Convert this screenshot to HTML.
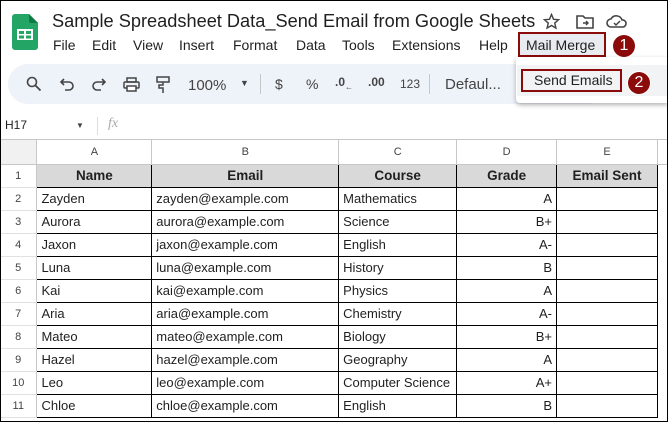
<!DOCTYPE html>
<html><head><style>
*{margin:0;padding:0;box-sizing:border-box}
body{width:668px;height:422px;overflow:hidden;background:#fff;font-family:"Liberation Sans",sans-serif;position:relative;color:#1f1f1f}
.frame{position:absolute;left:0;top:0;width:668px;height:422px;border:1px solid #000;z-index:50;pointer-events:none}
.abs{position:absolute}
.title{left:52px;top:11px;font-size:18.2px;color:#1f1f1f}
.menu{top:37px;font-size:14px;color:#1f1f1f}
.tb{left:8px;top:64px;width:600px;height:40px;background:#eef2f9;border-radius:20px}
.ti{font-size:14px;color:#444}
.grid{position:absolute;left:0;top:140px}
table{border-collapse:collapse;table-layout:fixed}
td{height:23px;font-size:13px;padding:0 4px;white-space:nowrap;overflow:hidden}
.hdr td{height:24px;background:#fff;color:#444;font-size:11px;text-align:center;border-right:1px solid #c7c7c7;border-bottom:1px solid #c7c7c7}
.rn{background:#fff;color:#444;font-size:11px;text-align:center;border-right:1px solid #c7c7c7;border-bottom:1px solid #e1e1e1}
.d{border:1px solid #000}
.h{background:#d9d9d9;font-weight:bold;text-align:center;font-size:13.5px}
.r{text-align:right}
.badge{position:absolute;width:22px;height:22px;border-radius:50%;background:#8b0a0a;color:#fff;font-size:16px;text-align:center;line-height:22px;box-shadow:0 0 0 1px #fff}
</style></head><body>
<div class="frame"></div>
<svg class="abs" style="left:12px;top:14px" width="26" height="36" viewBox="0 0 26 36"><path d="M3 0h14l9 9v24a3 3 0 0 1-3 3H3a3 3 0 0 1-3-3V3a3 3 0 0 1 3-3z" fill="#23a566"/><path d="M17 0l9 9h-7a2 2 0 0 1-2-2z" fill="#0f7a42"/><rect x="5" y="15" width="16" height="11" fill="#fff"/><rect x="7" y="17" width="5" height="3" fill="#23a566"/><rect x="14" y="17" width="5" height="3" fill="#23a566"/><rect x="7" y="21.5" width="5" height="3" fill="#23a566"/><rect x="14" y="21.5" width="5" height="3" fill="#23a566"/></svg>
<div class="abs title">Sample Spreadsheet Data_Send Email from Google Sheets</div>
<svg class="abs" style="left:543px;top:13px" width="17" height="17" viewBox="0 0 24 24"><path d="M12 2l2.9 6.9 7.1.6-5.4 4.7 1.6 7.1L12 17.6 5.8 21.3l1.6-7.1L2 9.5l7.1-.6z" fill="none" stroke="#444" stroke-width="2"/></svg>
<svg class="abs" style="left:576px;top:14px" width="18" height="15" viewBox="0 0 18 15"><path d="M1 2h6l2 2h8v10H1z" fill="none" stroke="#444" stroke-width="1.6"/><path d="M7 9h5M10 7l2 2-2 2" stroke="#444" stroke-width="1.4" fill="none"/></svg>
<svg class="abs" style="left:606px;top:13px" width="22" height="16" viewBox="0 0 22 16"><path d="M5 14a4 4 0 0 1 0-8 6 6 0 0 1 11 1 3.5 3.5 0 0 1 1 7z" fill="none" stroke="#444" stroke-width="1.6"/><path d="M8 10l2 2 4-4" stroke="#444" stroke-width="1.5" fill="none"/></svg>
<div class="abs menu" style="left:53px">File</div>
<div class="abs menu" style="left:92px">Edit</div>
<div class="abs menu" style="left:133px">View</div>
<div class="abs menu" style="left:179px">Insert</div>
<div class="abs menu" style="left:233px">Format</div>
<div class="abs menu" style="left:296px">Data</div>
<div class="abs menu" style="left:342px">Tools</div>
<div class="abs menu" style="left:392px">Extensions</div>
<div class="abs menu" style="left:479px">Help</div>
<div class="abs" style="left:518px;top:32px;width:88px;height:25px;border:2px solid #8b0a0a;background:#e8ebef;font-size:14px;padding:3px 0 0 6px">Mail Merge</div>
<div class="badge" style="left:613px;top:35px">1</div>
<div class="abs tb"></div>
<svg class="abs" style="left:26px;top:76px" width="16" height="16" viewBox="0 0 16 16"><circle cx="6" cy="6" r="4.5" fill="none" stroke="#444" stroke-width="1.6"/><path d="M9.5 9.5l5 5" stroke="#444" stroke-width="1.8"/></svg>
<svg class="abs" style="left:60px;top:78px" width="14" height="13" viewBox="0 0 14 13"><path d="M4 1L1 4l3 3M1 4h8a4 4 0 0 1 0 8H5" fill="none" stroke="#444" stroke-width="1.6"/></svg>
<svg class="abs" style="left:92px;top:78px" width="14" height="13" viewBox="0 0 14 13"><path d="M10 1l3 3-3 3M13 4H5a4 4 0 0 0 0 8h4" fill="none" stroke="#444" stroke-width="1.6"/></svg>
<svg class="abs" style="left:123px;top:77px" width="17" height="15" viewBox="0 0 17 15"><rect x="4" y="1" width="9" height="4" fill="none" stroke="#444" stroke-width="1.5"/><rect x="1" y="5" width="15" height="6" rx="1" fill="none" stroke="#444" stroke-width="1.5"/><rect x="4" y="9" width="9" height="5" fill="#fff" stroke="#444" stroke-width="1.5"/></svg>
<svg class="abs" style="left:156px;top:76px" width="14" height="18" viewBox="0 0 14 18"><rect x="1" y="1" width="12" height="5" fill="none" stroke="#444" stroke-width="1.5"/><path d="M7 6v3H3v3h4v5" fill="none" stroke="#444" stroke-width="1.5"/></svg>
<div class="abs ti" style="left:188px;top:77px;font-size:15px">100%</div>
<div class="abs" style="left:240px;top:78px;font-size:9px;color:#444">▼</div>
<div class="abs" style="left:260px;top:74px;width:1px;height:20px;background:#c7c7c7"></div>
<div class="abs ti" style="left:275px;top:76px">$</div>
<div class="abs ti" style="left:306px;top:76px">%</div>
<div class="abs ti" style="left:335px;top:75px;font-size:12px;font-weight:bold">.0<sub style="font-size:8px">←</sub></div>
<div class="abs ti" style="left:368px;top:75px;font-size:12px;font-weight:bold">.00</div>
<div class="abs ti" style="left:400px;top:77px;font-size:12px">123</div>
<div class="abs" style="left:429px;top:74px;width:1px;height:20px;background:#c7c7c7"></div>
<div class="abs ti" style="left:445px;top:76px;font-size:15px">Defaul...</div>
<div class="abs" style="left:516px;top:57px;width:152px;height:46px;background:#fff;box-shadow:0 2px 5px rgba(0,0,0,.3);border-radius:0 0 0 4px"></div>
<div class="abs" style="left:517px;top:65px;width:151px;height:31px;background:#f1f3f4"></div>
<div class="abs" style="left:521px;top:69px;width:101px;height:23px;border:2px solid #8b0a0a;font-size:14px;padding:1px 0 0 11px;color:#1f1f1f">Send Emails</div>
<div class="badge" style="left:628px;top:72px">2</div>
<div class="abs" style="left:5px;top:118px;font-size:12px">H17</div>
<div class="abs" style="left:76px;top:121px;font-size:8px;color:#444">▼</div>
<div class="abs" style="left:97px;top:117px;width:1px;height:18px;background:#ddd"></div>
<div class="abs" style="left:108px;top:116px;font-size:14px;font-style:italic;color:#aaa;font-family:'Liberation Serif',serif">fx</div>
<div class="abs" style="left:0;top:139px;width:668px;height:1px;background:#c7c7c7"></div>
<div class="grid">
<table>
<colgroup><col style="width:37px"><col style="width:115px"><col style="width:187px"><col style="width:118px"><col style="width:100px"><col style="width:101px"><col style="width:10px"></colgroup>
<tr class="hdr"><td style="background:#f1f1f1"></td><td>A</td><td>B</td><td>C</td><td>D</td><td>E</td><td></td></tr>
<tr><td class="rn">1</td><td class="d h">Name</td><td class="d h">Email</td><td class="d h">Course</td><td class="d h">Grade</td><td class="d h">Email Sent</td><td></td></tr>
<tr><td class="rn">2</td><td class="d">Zayden</td><td class="d">zayden@example.com</td><td class="d">Mathematics</td><td class="d r">A</td><td class="d"></td><td></td></tr>
<tr><td class="rn">3</td><td class="d">Aurora</td><td class="d">aurora@example.com</td><td class="d">Science</td><td class="d r">B+</td><td class="d"></td><td></td></tr>
<tr><td class="rn">4</td><td class="d">Jaxon</td><td class="d">jaxon@example.com</td><td class="d">English</td><td class="d r">A-</td><td class="d"></td><td></td></tr>
<tr><td class="rn">5</td><td class="d">Luna</td><td class="d">luna@example.com</td><td class="d">History</td><td class="d r">B</td><td class="d"></td><td></td></tr>
<tr><td class="rn">6</td><td class="d">Kai</td><td class="d">kai@example.com</td><td class="d">Physics</td><td class="d r">A</td><td class="d"></td><td></td></tr>
<tr><td class="rn">7</td><td class="d">Aria</td><td class="d">aria@example.com</td><td class="d">Chemistry</td><td class="d r">A-</td><td class="d"></td><td></td></tr>
<tr><td class="rn">8</td><td class="d">Mateo</td><td class="d">mateo@example.com</td><td class="d">Biology</td><td class="d r">B+</td><td class="d"></td><td></td></tr>
<tr><td class="rn">9</td><td class="d">Hazel</td><td class="d">hazel@example.com</td><td class="d">Geography</td><td class="d r">A</td><td class="d"></td><td></td></tr>
<tr><td class="rn">10</td><td class="d">Leo</td><td class="d">leo@example.com</td><td class="d">Computer Science</td><td class="d r">A+</td><td class="d"></td><td></td></tr>
<tr><td class="rn">11</td><td class="d">Chloe</td><td class="d">chloe@example.com</td><td class="d">English</td><td class="d r">B</td><td class="d"></td><td></td></tr>
</table>
</div>
</body></html>
